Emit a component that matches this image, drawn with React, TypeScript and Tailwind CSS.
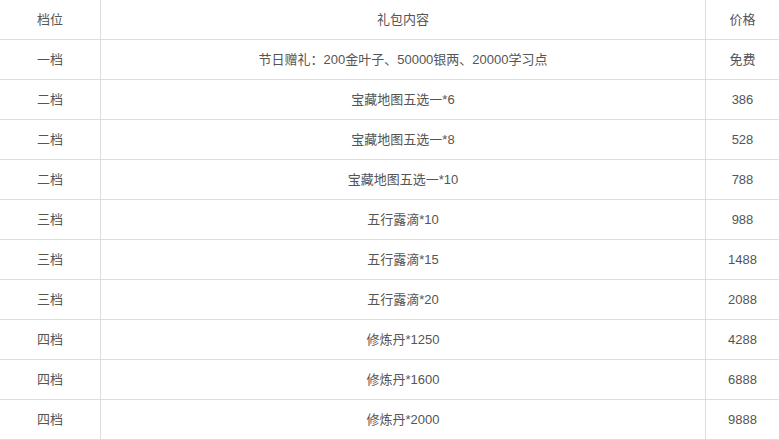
const rows: [string, string, string][] = [
  ["一档", "节日赠礼：200金叶子、50000银两、20000学习点", "免费"],
  ["二档", "宝藏地图五选一*6", "386"],
  ["二档", "宝藏地图五选一*8", "528"],
  ["二档", "宝藏地图五选一*10", "788"],
  ["三档", "五行露滴*10", "988"],
  ["三档", "五行露滴*15", "1488"],
  ["三档", "五行露滴*20", "2088"],
  ["四档", "修炼丹*1250", "4288"],
  ["四档", "修炼丹*1600", "6888"],
  ["四档", "修炼丹*2000", "9888"],
];

function Row({ cells }: { cells: [string, string, string] }) {
  return (
    <div className="flex h-10 border-b border-[#dddddd]">
      <div className="flex w-[101px] shrink-0 items-center justify-center border-r border-[#dddddd]">
        {cells[0]}
      </div>
      <div className="flex w-[605px] shrink-0 items-center justify-center border-r border-[#dddddd]">
        {cells[1]}
      </div>
      <div className="flex flex-1 items-center justify-center">{cells[2]}</div>
    </div>
  );
}

export default function App() {
  return (
    <div className="h-[440px] w-[779px] overflow-hidden bg-white font-['Liberation_Sans','Noto_Sans_CJK_SC',sans-serif] text-[13px] text-[#555555]">
      <Row cells={["档位", "礼包内容", "价格"]} />
      {rows.map((r, i) => (
        <Row key={i} cells={r} />
      ))}
    </div>
  );
}
